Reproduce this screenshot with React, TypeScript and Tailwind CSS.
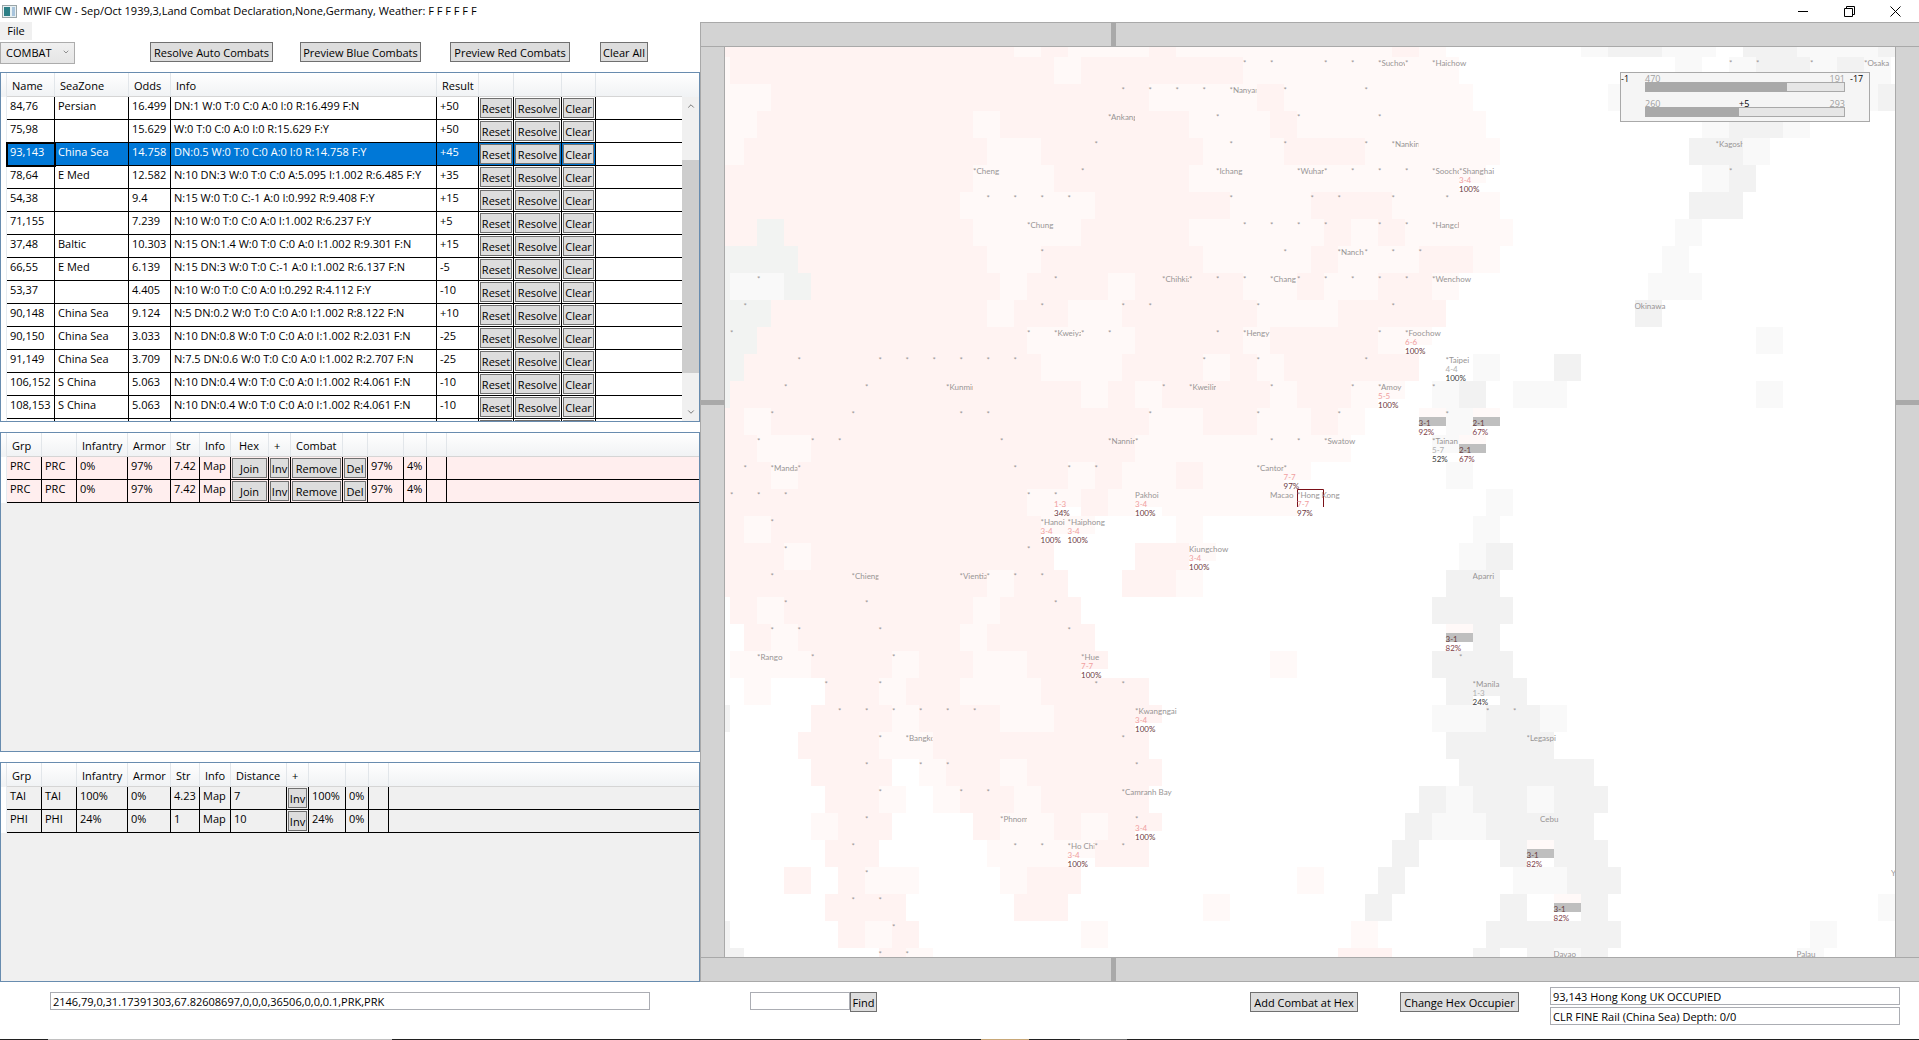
import { ReactNode } from "react";
import { ChevronDown, ChevronUp } from "lucide-react";
import clsx from "clsx";

type Cell = string | { button: string };
type Column = { title: string; width?: number };

const btn = (button: string): Cell => ({ button });

const combatColumns: Column[] = [
  { title: "Name", width: 48 },
  { title: "SeaZone", width: 74 },
  { title: "Odds", width: 42 },
  { title: "Info", width: 266 },
  { title: "Result", width: 42 },
  { title: "", width: 35 },
  { title: "", width: 48 },
  { title: "", width: 34 },
  { title: "" },
];

const combats = [
  ["84,76", "Persian", "16.499", "DN:1 W:0 T:0 C:0 A:0 I:0 R:16.499 F:N", "+50"],
  ["75,98", "", "15.629", "W:0 T:0 C:0 A:0 I:0 R:15.629 F:Y", "+50"],
  ["93,143", "China Sea", "14.758", "DN:0.5 W:0 T:0 C:0 A:0 I:0 R:14.758 F:Y", "+45"],
  ["78,64", "E Med", "12.582", "N:10 DN:3 W:0 T:0 C:0 A:5.095 I:1.002 R:6.485 F:Y", "+35"],
  ["54,38", "", "9.4", "N:15 W:0 T:0 C:-1 A:0 I:0.992 R:9.408 F:Y", "+15"],
  ["71,155", "", "7.239", "N:10 W:0 T:0 C:0 A:0 I:1.002 R:6.237 F:Y", "+5"],
  ["37,48", "Baltic", "10.303", "N:15 ON:1.4 W:0 T:0 C:0 A:0 I:1.002 R:9.301 F:N", "+15"],
  ["66,55", "E Med", "6.139", "N:15 DN:3 W:0 T:0 C:-1 A:0 I:1.002 R:6.137 F:N", "-5"],
  ["53,37", "", "4.405", "N:10 W:0 T:0 C:0 A:0 I:0.292 R:4.112 F:Y", "-10"],
  ["90,148", "China Sea", "9.124", "N:5 DN:0.2 W:0 T:0 C:0 A:0 I:1.002 R:8.122 F:N", "+10"],
  ["90,150", "China Sea", "3.033", "N:10 DN:0.8 W:0 T:0 C:0 A:0 I:1.002 R:2.031 F:N", "-25"],
  ["91,149", "China Sea", "3.709", "N:7.5 DN:0.6 W:0 T:0 C:0 A:0 I:1.002 R:2.707 F:N", "-25"],
  ["106,152", "S China", "5.063", "N:10 DN:0.4 W:0 T:0 C:0 A:0 I:1.002 R:4.061 F:N", "-10"],
  ["108,153", "S China", "5.063", "N:10 DN:0.4 W:0 T:0 C:0 A:0 I:1.002 R:4.061 F:N", "-10"],
];

const combatRows: Cell[][] = combats.map((c) => [...c, btn("Reset"), btn("Resolve"), btn("Clear"), ""]);

const attackerColumns: Column[] = [
  { title: "Grp", width: 35 },
  { title: "", width: 35 },
  { title: "Infantry", width: 51 },
  { title: "Armor", width: 43 },
  { title: "Str", width: 29 },
  { title: "Info", width: 31 },
  { title: "Hex", width: 38 },
  { title: "+", width: 22 },
  { title: "Combat", width: 52 },
  { title: "", width: 25 },
  { title: "", width: 36 },
  { title: "", width: 23 },
  { title: "", width: 20 },
  { title: "" },
];

const attackerRows: Cell[][] = [1, 2].map(() => [
  "PRC", "PRC", "0%", "97%", "7.42", "Map", btn("Join"), btn("Inv"), btn("Remove"), btn("Del"), "97%", "4%", "", "",
]);

const defenderColumns: Column[] = [
  { title: "Grp", width: 35 },
  { title: "", width: 35 },
  { title: "Infantry", width: 51 },
  { title: "Armor", width: 43 },
  { title: "Str", width: 29 },
  { title: "Info", width: 31 },
  { title: "Distance", width: 56 },
  { title: "+", width: 22 },
  { title: "", width: 37 },
  { title: "", width: 23 },
  { title: "", width: 20 },
  { title: "" },
];

const defenderRows: Cell[][] = [
  ["TAI", "TAI", "100%", "0%", "4.23", "Map", "7", btn("Inv"), "100%", "0%", "", ""],
  ["PHI", "PHI", "24%", "0%", "1", "Map", "10", btn("Inv"), "24%", "0%", "", ""],
];

// Map terrain: one string per hex row, "<fill> <from> <to>" in half-hex units
const fills: Record<string, string> = {
  P: "#fff3f2",
  L: "#fff9f8",
  G: "#f2f2f2",
  g: "#f9f9f9",
  E: "#f2f3f2",
};

const terrain = [
  "P -1 21,L 21 23,P 23 25,L 25 31,P 31 33,L 33 49,P 49 51,L 51 53,g 63 65,G 65 69,g 69 73,G 75 79,g 79 85,G 85 87",
  "L -1 0,P 0 24,L 24 26,P 26 38,L 38 54,g 70 72,g 74 76,G 76 80,g 80 82,G 82 84,g 84 86",
  "L -1 3,P 3 31,L 31 39,P 39 41,L 41 55,g 65 67,g 83 85,G 85 87",
  "L -1 2,P 2 18,L 18 20,P 20 34,L 34 40,P 40 42,L 42 56,g 72 74,G 74 78,g 78 80",
  "L -1 1,P 1 19,L 19 23,P 23 35,L 35 41,P 41 47,L 47 57,G 71 75,g 75 77",
  "P -1 18,L 18 24,P 24 34,L 34 56,g 72 74,G 74 76",
  "P -1 17,L 17 27,P 27 37,L 37 43,P 43 49,L 49 57,G 71 75",
  "P -1 2,E 2 4,P 4 18,L 18 26,P 26 34,L 34 44,P 44 46,L 46 48,P 48 50,L 50 58,g 70 72",
  "E -1 5,P 5 19,L 19 23,P 23 35,L 35 43,P 43 45,L 45 51,P 51 55,L 55 57,g 69 71",
  "E -1 0,g 0 4,E 4 6,P 6 20,L 20 22,P 22 28,L 28 30,P 30 38,L 38 42,P 42 44,L 44 48,P 48 52,L 52 54,g 68 72",
  "E -1 3,P 3 19,L 19 21,P 21 25,L 25 29,P 29 39,L 39 45,P 45 53,G 67 69",
  "E -1 2,P 2 22,L 22 30,P 30 38,L 38 40,P 40 48,L 48 52,g 76 78",
  "E -1 1,P 1 23,L 23 29,P 29 35,L 35 37,P 37 39,L 39 41,P 41 51,g 55 57,G 61 63",
  "E -1 0,P 0 26,L 26 28,P 28 30,L 30 32,P 32 40,L 40 42,P 42 46,L 46 50,g 52 54,G 54 56,g 58 62,g 76 78",
  "P -1 1,L 1 3,P 3 31,L 31 35,P 35 39,L 39 43,P 43 45,L 45 47,L 51 53,g 53 55,L 55 57",
  "P -1 2,L 2 6,P 6 30,L 30 46,g 52 54,L 54 56",
  "P -1 3,L 3 5,P 5 25,L 25 27,P 27 29,L 29 33,P 33 35,L 35 43,g 53 55",
  "P -1 22,L 22 26,P 26 28,L 28 42,g 56 58",
  "P -1 1,L 1 3,P 3 23,L 23 27,L 33 35,g 55 57",
  "P -1 4,L 4 6,P 6 24,P 30 34,L 34 36,g 54 56,G 56 58",
  "P -1 19,L 19 21,P 21 25,P 29 33,L 33 35,G 53 57",
  "P 0 2,L 2 4,P 4 18,L 18 20,P 20 26,G 52 58",
  "P 1 3,L 3 5,P 5 17,L 17 19,P 19 27,L 53 55,G 55 57",
  "L 0 6,P 6 12,L 12 14,P 14 18,L 18 22,P 22 28,L 40 42,G 52 58",
  "L 1 3,P 7 11,L 11 13,P 13 17,L 17 23,P 23 31,G 53 59",
  "G -1 0,P 6 12,L 12 14,P 14 20,L 20 24,P 24 32,g 52 56,G 56 60,g 60 62",
  "P 5 11,L 11 15,P 15 31,G 53 61",
  "P 6 12,L 14 16,P 16 20,L 20 22,P 22 32,G 54 64",
  "P 7 11,L 11 13,L 15 17,P 17 21,L 21 23,P 23 31,G 51 53,g 53 55,G 55 59,g 59 61,G 61 65",
  "L 6 8,P 8 12,P 18 20,L 20 24,P 24 26,L 26 28,P 28 32,G 50 52,g 52 56,G 56 64",
  "P 7 11,L 19 27,P 27 31,G 49 51,G 57 59,L 59 61,G 61 65",
  "P 4 6,P 8 10,L 10 14,L 20 22,P 22 26,L 42 44,G 48 50,g 58 62,G 62 66",
  "P 7 13,P 21 25,L 35 37,G 47 49,G 57 59,L 61 63,G 63 65,g 85 87",
  "G -1 0,P 8 10,L 10 12,P 12 14,L 26 28,L 46 48,G 56 66,g 80 82",
  "G -1 1,P 11 13,L 13 15,P 45 49,G 55 57,G 59 61,g 61 63,G 63 65,g 79 81",
];

// Rail and resource markers per hex row
const markers = [
  [],
  [38, 40, 44, 46, 50, 74, 76, 80],
  [29, 31, 33, 35, 41, 47],
  [36, 42, 48],
  [27, 37, 41, 47],
  [26, 44, 46, 48, 50, 74],
  [19, 21, 23, 25, 37, 43, 45, 49, 53],
  [38, 40, 42, 44, 48, 50],
  [23, 41, 47, 49, 51],
  [2, 24, 34, 36, 38, 42, 44, 46, 48, 50],
  [1, 23, 29, 31, 39, 49],
  [0, 22, 26, 28, 36, 48],
  [5, 11, 13, 15, 17, 19, 21, 35, 39, 47],
  [4, 10, 32, 40, 46, 52],
  [3, 9, 17, 19, 31, 39, 45, 53],
  [2, 6, 8, 20, 30, 40, 42],
  [1, 5, 21, 25, 27, 41],
  [0, 2, 4, 22, 24],
  [3],
  [4, 22],
  [3, 19, 21, 23],
  [4, 10, 24],
  [3, 5, 11, 25],
  [6, 12, 54],
  [7, 11, 27, 29],
  [8, 10, 12, 14, 16, 18, 56, 58],
  [11, 29],
  [10, 14, 16, 30],
  [11, 17, 19],
  [10, 30],
  [9, 21, 23, 27, 29],
  [10],
  [9, 11],
  [12],
  [11, 13],
];

// [row, column, name, clipped to its own hex]
const cities: [number, number, string, boolean?][] = [
  [1, 48, "*Suchow", true],
  [1, 52, "*Haichow"],
  [1, 84, "*Osaka"],
  [2, 37, "*Nanyan", true],
  [3, 28, "*Ankang", true],
  [4, 49, "*Nankin", true],
  [4, 73, "*Kagosh", true],
  [5, 18, "*Cheng", true],
  [5, 36, "*Ichang", true],
  [5, 42, "*Wuhan", true],
  [5, 52, "*Soocho", true],
  [5, 54, "*Shanghai"],
  [7, 22, "*Chung", true],
  [7, 52, "*Hangch", true],
  [8, 45, "*Nanch", true],
  [9, 32, "*Chihkia", true],
  [9, 40, "*Chang", true],
  [9, 52, "*Wenchow"],
  [10, 67, "Okinawa"],
  [11, 24, "*Kweiya", true],
  [11, 38, "*Hengy", true],
  [11, 50, "*Foochow"],
  [12, 53, "*Taipei"],
  [13, 16, "*Kunmin", true],
  [13, 34, "*Kweilin", true],
  [13, 48, "*Amoy"],
  [15, 28, "*Nannin", true],
  [15, 44, "*Swatow"],
  [15, 52, "*Tainan", true],
  [16, 3, "*Manda", true],
  [16, 39, "*Canton", true],
  [17, 30, "Pakhoi"],
  [17, 40, "Macao"],
  [17, 42, "*Hong Kong"],
  [18, 23, "*Hanoi", true],
  [18, 25, "*Haiphong"],
  [19, 34, "Kiungchow"],
  [20, 9, "*Chieng", true],
  [20, 17, "*Vientia", true],
  [20, 55, "Aparri"],
  [23, 2, "*Rango", true],
  [23, 26, "*Hue"],
  [24, 55, "*Manila"],
  [25, 30, "*Kwangngai"],
  [26, 13, "*Bangko", true],
  [26, 59, "*Legaspi"],
  [28, 29, "*Camranh Bay"],
  [29, 20, "*Phnom", true],
  [29, 60, "Cebu"],
  [30, 25, "*Ho Chi", true],
  [31, 86, "Y"],
  [34, 61, "Davao"],
  [34, 79, "Palau"],
];

type Side = "red" | "gray" | "bar";

const forces: [number, number, string, string, Side][] = [
  [5, 54, "3-4", "100%", "red"],
  [11, 50, "6-6", "100%", "red"],
  [12, 53, "4-4", "100%", "gray"],
  [13, 48, "5-5", "100%", "red"],
  [14, 51, "3-1", "92%", "bar"],
  [14, 55, "2-1", "67%", "bar"],
  [15, 52, "5-7", "52%", "gray"],
  [15, 54, "2-1", "67%", "bar"],
  [16, 41, "7-7", "97%", "red"],
  [17, 24, "1-3", "34%", "red"],
  [17, 30, "3-4", "100%", "red"],
  [17, 42, "7-7", "97%", "red"],
  [18, 23, "3-4", "100%", "red"],
  [18, 25, "3-4", "100%", "red"],
  [19, 34, "3-4", "100%", "red"],
  [22, 53, "3-1", "82%", "bar"],
  [23, 26, "7-7", "100%", "red"],
  [24, 55, "1-3", "24%", "gray"],
  [25, 30, "3-4", "100%", "red"],
  [29, 30, "3-4", "100%", "red"],
  [30, 25, "3-4", "100%", "red"],
  [30, 59, "3-1", "82%", "bar"],
  [32, 61, "3-1", "82%", "bar"],
];

const strengthFill = { red: "#f0a0a0", gray: "#b0b0b0", bar: "#6b4040" };
const percentFill = { red: "#6c3840", gray: "#3a3a3a", bar: "#804048" };

const hexX = (col: number) => 5 + col * 13.5;
const hexY = (row: number) => row * 27 - 17;

function WorldMap() {
  return (
    <svg className="absolute inset-0 h-full w-full font-['Lato','Open_Sans',sans-serif] text-[8px]" aria-label="Combat map">
      <g shapeRendering="crispEdges">
        {terrain.map((line, row) =>
          line.split(",").map((run) => {
            const [kind, from, to] = run.split(" ");
            return (
              <rect
                key={row + run}
                x={hexX(Number(from))}
                y={hexY(row)}
                width={(Number(to) - Number(from)) * 13.5}
                height={27}
                fill={fills[kind]}
              />
            );
          }),
        )}
        {forces.map(([row, col, , , side]) => (
          <g key={`${row}-${col}`}>
            <rect x={hexX(col)} y={hexY(row) + 18} width={27} height={9} fill="#fff" />
            {side === "bar" && <rect x={hexX(col)} y={hexY(row) + 9} width={27} height={9} fill="#bfbfbf" />}
          </g>
        ))}
      </g>

      {/* Selected hex */}
      <path d="M572.5 460 V442.5 H598.5 V460" fill="none" stroke="#7a1018" />

      <g fill="#989595">
        {markers.map((cols, row) =>
          cols.map((col) => (
            <text key={`${row}-${col}`} x={hexX(col)} y={hexY(row) + 9}>
              *
            </text>
          )),
        )}
        {cities.map(([row, col, name, clipped]) => (
          <svg key={`${row}-${col}`} x={hexX(col)} y={hexY(row)} width={clipped ? 27 : 80} height={12}>
            <text y={9}>{name}</text>
          </svg>
        ))}
      </g>

      {forces.map(([row, col, strength, percent, side]) => (
        <g key={`${row}-${col}`}>
          <text x={hexX(col)} y={hexY(row) + 18} fill={strengthFill[side]}>
            {strength}
          </text>
          <text x={hexX(col)} y={hexY(row) + 27} fill={percentFill[side]}>
            {percent}
          </text>
        </g>
      ))}
    </svg>
  );
}

function Button({ children, className }: { children: ReactNode; className?: string }) {
  return (
    <button
      className={clsx(
        "flex h-5 items-center justify-center whitespace-nowrap border border-[#707070] bg-[#dddddd] pt-px leading-4",
        className,
      )}
    >
      {children}
    </button>
  );
}

type GridProps = {
  label: string;
  columns: Column[];
  rows: Cell[][];
  selected?: number;
  rowClass: string;
};

function DataGrid({ label, columns, rows, selected, rowClass }: GridProps) {
  return (
    <table aria-label={label} className="w-full table-fixed border-separate border-spacing-0">
      <colgroup>
        <col style={{ width: 6 }} />
        {columns.map((c, i) => (
          <col key={i} style={c.width ? { width: c.width } : undefined} />
        ))}
      </colgroup>
      <thead>
        <tr className="h-6 bg-linear-to-b from-white to-[#f0f2f4]">
          <td className="border-r border-[#e2e6ea] p-0" />
          {columns.map((c, i) => (
            <th
              key={i}
              className={clsx(
                "overflow-hidden whitespace-nowrap border-b border-[#d5d5d5] pb-0 pr-0 pt-[3px] text-left font-normal",
                c.title === "Hex" ? "pl-2" : "pl-[5px]",
                i < columns.length - 1 && "border-r border-r-[#e2e6ea]",
              )}
            >
              {c.title}
            </th>
          ))}
        </tr>
      </thead>
      <tbody>
        {rows.map((row, r) => (
          <tr key={r} className={clsx("h-[23px]", rowClass)}>
            <td className="border-r border-[#e6ebf0] bg-white p-0" />
            {row.map((cell, i) => {
              const active = r === selected && i < 8;
              return (
                <td
                  key={i}
                  className={clsx(
                    "overflow-hidden whitespace-nowrap border-b border-black p-0 align-top",
                    i < row.length - 1 && "border-r",
                    active && "bg-[#0078d7] text-white",
                    active && i === 0 && "outline-2 -outline-offset-1 outline-black",
                  )}
                >
                  {typeof cell === "string" ? (
                    <div className="px-[3px] pt-px leading-4">{cell}</div>
                  ) : (
                    <div className="flex px-px pt-px text-black">
                      <Button className="min-w-0 flex-1 overflow-hidden">{cell.button}</Button>
                    </div>
                  )}
                </td>
              );
            })}
          </tr>
        ))}
      </tbody>
    </table>
  );
}

function BalanceBar({ left, right, value }: { left: string; right: string; value: number }) {
  return (
    <div className="w-[200px]">
      <div className="flex h-[9px] justify-between text-[#a0a0a0]">
        <span>{left}</span>
        <span>{right}</span>
      </div>
      <div className="h-[10px] border border-[#a9a9a9] bg-[#e6e6e6]">
        <div className="h-full bg-[#a9a9a9]" style={{ width: `${value}%` }} />
      </div>
    </div>
  );
}

function Legend() {
  return (
    <div className="absolute right-[25px] top-[25px] flex h-[50px] w-[250px] border border-[#a9a9a9] bg-[#f5f5f5] text-[9px] leading-3">
      <span className="w-6">-1</span>
      <div className="flex flex-col gap-[6px]">
        <BalanceBar left="470" right="191" value={71} />
        <BalanceBar left="260" right="293" value={47} />
      </div>
      <span className="pl-[5px]">-17</span>
      <span className="absolute left-[118px] top-[25px]">+5</span>
    </div>
  );
}

function HorizontalEdge() {
  return (
    <div className="flex h-[25px] shrink-0 border-y border-[#a9a9a9] bg-[#d3d3d3]">
      <div className="w-[410px] shrink" />
      <div className="w-[5px] bg-[#a9a9a9]" />
    </div>
  );
}

function VerticalEdge({ side }: { side: "left" | "right" }) {
  return (
    <div
      className={clsx(
        "flex w-6 shrink-0 flex-col border-[#a9a9a9] bg-[#d3d3d3]",
        side === "left" ? "border-r" : "border-l",
      )}
    >
      <div className="h-[353px]" />
      <div className="h-[5px] bg-[#a9a9a9]" />
    </div>
  );
}

function WindowButtons() {
  return (
    <div className="flex items-center gap-[35px] pr-[18px]">
      <button aria-label="Minimize">
        <svg width="11" height="11" stroke="#000" fill="none">
          <path d="M0 5.5 H10" />
        </svg>
      </button>
      <button aria-label="Restore">
        <svg width="11" height="11" stroke="#000" fill="none">
          <path d="M0.5 2.5 H8.5 V10.5 H0.5 Z M2.5 2.5 V0.5 H10.5 V8.5 H8.5" />
        </svg>
      </button>
      <button aria-label="Close">
        <svg width="11" height="11" stroke="#000" fill="none">
          <path d="M0.5 0.5 L10.5 10.5 M10.5 0.5 L0.5 10.5" />
        </svg>
      </button>
    </div>
  );
}

const panel = "border border-[#688caf]";
const field = "h-[18px] border border-[#abadb3] bg-white px-[2px] outline-none";

export default function App() {
  return (
    <div className="flex min-h-screen flex-col bg-white font-['Open_Sans','Noto_Sans',sans-serif] text-[11px] text-black">
      <header className="flex h-[22px] items-center">
        <svg width="16" height="13" className="ml-[2px]">
          <rect x="0.5" y="0.5" width="14" height="12" fill="#e8f0f2" stroke="#9aa5a8" />
          <rect x="2" y="2" width="6" height="9" fill="#2c7f86" />
          <rect x="10" y="2" width="3" height="9" fill="#a8c4dc" />
        </svg>
        <h1 className="ml-[5px] flex-1">MWIF CW - Sep/Oct 1939,3,Land Combat Declaration,None,Germany, Weather: F F F F F F</h1>
        <WindowButtons />
      </header>

      <div className="flex flex-1">
        <section className="flex w-[700px] shrink-0 flex-col">
          <nav className="flex h-[18px]">
            <button className="w-8 bg-[#f0f0f0]">File</button>
          </nav>
          <div className="flex h-8 items-start pt-[2px]">
            <div className="relative mr-[75px]">
              <select
                aria-label="Phase"
                className="h-[22px] w-[75px] appearance-none border border-[#acacac] bg-linear-to-b from-[#f0f0f0] to-[#e5e5e5] pl-[5px]"
              >
                <option>COMBAT</option>
              </select>
              <ChevronDown className="pointer-events-none absolute right-[5px] top-[6px] h-2 w-2 text-[#606060]" />
            </div>
            <Button className="w-[123px]">Resolve Auto Combats</Button>
            <Button className="ml-[27px] w-[121px]">Preview Blue Combats</Button>
            <Button className="ml-[29px] w-[120px]">Preview Red Combats</Button>
            <Button className="ml-[30px] w-12">Clear All</Button>
          </div>

          <div className={clsx(panel, "flex h-[350px] overflow-hidden")}>
            <div className="min-w-0 flex-1">
              <DataGrid
                label="Combats"
                columns={combatColumns}
                rows={[...combatRows, ["", "", "", "", "", btn(""), btn(""), btn(""), ""]]}
                selected={2}
                rowClass="bg-white"
              />
            </div>
            <div className="flex w-[17px] flex-col bg-[#f0f0f0]">
              <div className="h-6 bg-linear-to-b from-white to-[#f0f2f4]" />
              <ChevronUp className="mx-auto mt-1 h-[10px] w-[10px] text-[#606060]" />
              <div className="mt-[49px] h-[213px] bg-[#cdcdcd]" />
              <ChevronDown className="mx-auto mb-1 mt-auto h-[10px] w-[10px] text-[#606060]" />
            </div>
          </div>

          <div className={clsx(panel, "mt-[10px] h-80 bg-[#f0f0f0]")}>
            <DataGrid label="Attackers" columns={attackerColumns} rows={attackerRows} rowClass="bg-[#ffeeee]" />
          </div>

          <div className={clsx(panel, "mt-[10px] flex-1 bg-[#f0f0f0]")}>
            <DataGrid label="Defenders" columns={defenderColumns} rows={defenderRows} rowClass="bg-[#f0f0f0]" />
          </div>
        </section>

        <section className="flex min-w-0 flex-1 flex-col border-l border-[#a9a9a9]">
          <HorizontalEdge />
          <div className="flex flex-1">
            <VerticalEdge side="left" />
            <div className="relative min-w-0 flex-1 overflow-hidden bg-white">
              <WorldMap />
              <Legend />
            </div>
            <VerticalEdge side="right" />
          </div>
          <HorizontalEdge />
        </section>
      </div>

      <footer className="flex h-[57px] items-start pt-[10px]">
        <div className="w-[750px] pl-[50px]">
          <input
            aria-label="Group details"
            className={clsx(field, "w-[600px]")}
            defaultValue="2146,79,0,31.17391303,67.82608697,0,0,0,36506,0,0,0.1,PRK,PRK"
          />
        </div>
        <input aria-label="Find place" className={clsx(field, "w-[100px]")} />
        <Button className="w-[27px]">Find</Button>
        <div className="flex flex-1 justify-end">
          <Button className="mr-[42px] w-[108px]">Add Combat at Hex</Button>
          <Button className="mr-[31px] w-[119px]">Change Hex Occupier</Button>
        </div>
        <div className="-mt-[5px] mr-[19px] flex w-[350px] flex-col gap-[2px]">
          <input aria-label="Hex" className={field} defaultValue="93,143 Hong Kong UK OCCUPIED" />
          <input aria-label="Terrain" className={field} defaultValue="CLR FINE Rail (China Sea) Depth: 0/0" />
        </div>
      </footer>
      <div className="flex h-px bg-[#202020]">
        <div className="ml-12 w-[344px] bg-[#c0c0c0]" />
        <div className="ml-[589px] w-12 bg-[#c8a878]" />
        <div className="ml-[51px] w-[47px] bg-[#707070]" />
      </div>
    </div>
  );
}
